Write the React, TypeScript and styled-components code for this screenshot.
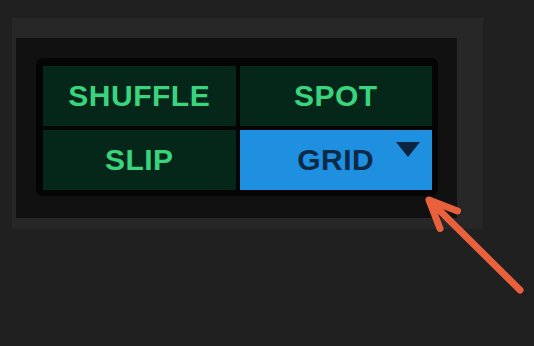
import styled, { createGlobalStyle } from "styled-components"

const GlobalStyle = createGlobalStyle`
    html, body {
        margin: 0;
        padding: 0;
        background-color: #202020;
        font-family: "Liberation Sans", Arial, sans-serif;
    }
`

const Page = styled.main`
    position: relative;
    width: 534px;
    height: 346px;
    padding: 18px 0 0 12px;
    box-sizing: border-box;
    overflow: hidden;
`

const OuterPanel = styled.section`
    width: 471px;
    height: 211px;
    background-color: #272727;
    padding: 20px 26px 11px 4px;
    box-sizing: border-box;
`

const InnerPanel = styled.div`
    width: 100%;
    height: 100%;
    background-color: #111111;
    padding: 20px 19px 22px 20px;
    box-sizing: border-box;
`

const ModeGrid = styled.div`
    width: 100%;
    height: 100%;
    background-color: #050505;
    border-radius: 7px;
    padding: 8px 6px 6px 7px;
    box-sizing: border-box;
    display: grid;
    grid-template-columns: 1fr 1fr;
    grid-template-rows: 1fr 1fr;
    gap: 4px;
`

const ModeButton = styled.button<{ $active?: boolean }>`
    position: relative;
    display: flex;
    align-items: center;
    justify-content: center;
    border: none;
    padding: 0;
    margin: 0;
    background-color: ${({ $active }) => ($active ? "#1f8fe0" : "#05271a")};
    color: ${({ $active }) => ($active ? "#0b2a48" : "#3bd47e")};
    font-family: "Liberation Sans", Arial, sans-serif;
    font-size: 30px;
    font-weight: 700;
    letter-spacing: 0.5px;
    line-height: 1;
    cursor: pointer;
`

const DropArrow = styled.span`
    position: absolute;
    top: 12px;
    right: 12px;
    width: 0;
    height: 0;
    border-left: 12px solid transparent;
    border-right: 12px solid transparent;
    border-top: 15px solid #0b2440;
`

const Annotation = styled.svg`
    position: absolute;
    left: 0;
    top: 0;
    pointer-events: none;
`

const modes = [
    { label: "SHUFFLE" },
    { label: "SPOT" },
    { label: "SLIP" },
    { label: "GRID", active: true },
]

export default function App() {
    return (
        <>
            <GlobalStyle />
            <Page>
                {/* Edit mode selector */}
                <OuterPanel>
                    <InnerPanel>
                        <ModeGrid>
                            {modes.map((mode) => (
                                <ModeButton key={mode.label} $active={mode.active}>
                                    {mode.label}
                                    {mode.active && <DropArrow />}
                                </ModeButton>
                            ))}
                        </ModeGrid>
                    </InnerPanel>
                </OuterPanel>

                {/* Callout arrow */}
                <Annotation width="534" height="346" viewBox="0 0 534 346">
                    <g stroke="#e8613c" strokeWidth="7" strokeLinecap="round" strokeLinejoin="round" fill="none">
                        <line x1="430" y1="201" x2="520" y2="290" />
                        <polyline points="440,228.5 429,200 457.5,211" />
                    </g>
                </Annotation>
            </Page>
        </>
    )
}
